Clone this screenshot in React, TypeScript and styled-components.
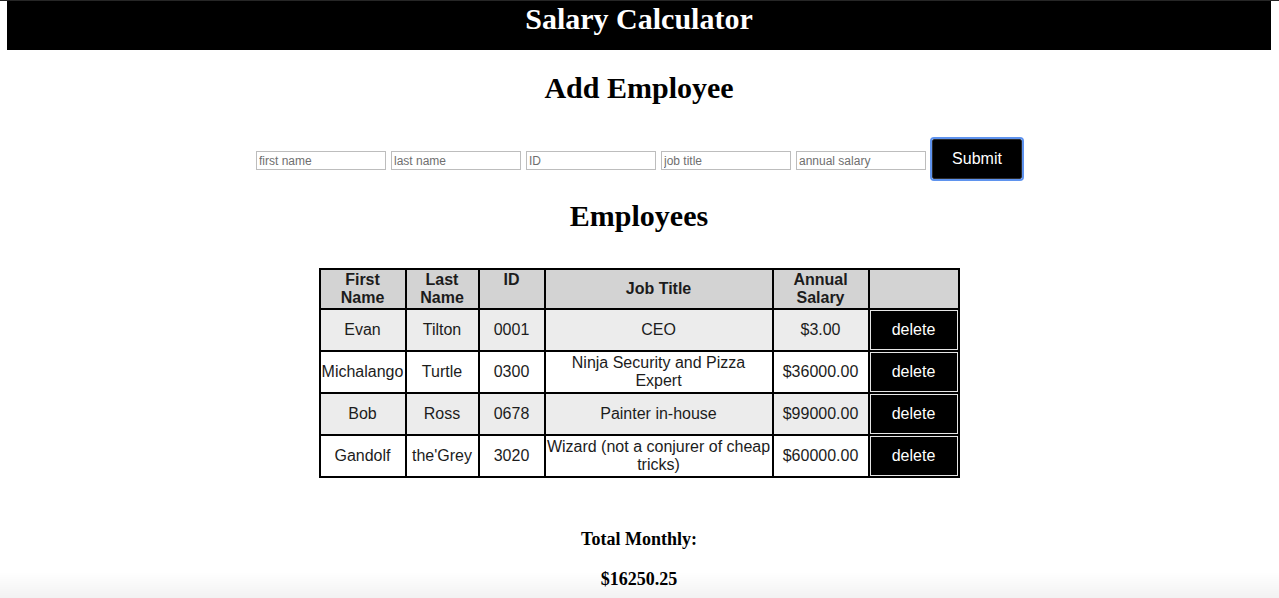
import styled, { createGlobalStyle } from "styled-components";

const GlobalStyle = createGlobalStyle`
  html, body {
    margin: 0;
    padding: 0;
    background: #fff;
  }
  body {
    border-top: 1px solid #262626;
    padding: 0 8px 0 7px;
    font-family: "Liberation Serif", "Times New Roman", serif;
    color: #000;
  }
`;

const Header = styled.h1`
  margin: 0;
  background-color: #000;
  color: #fff;
  font-size: 30px;
  font-weight: 700;
  line-height: 35px;
  height: 49px;
  text-align: center;
`;

const SectionTitle = styled.h2<{ $top: number; $bottom: number }>`
  margin: ${(props) => props.$top}px 0 ${(props) => props.$bottom}px;
  font-size: 30px;
  font-weight: 700;
  line-height: 36px;
  text-align: center;
`;

const Form = styled.form`
  display: flex;
  justify-content: center;
  align-items: center;
  gap: 5px;
  padding-left: 2px;
`;

const Input = styled.input`
  box-sizing: border-box;
  width: 130px;
  height: 19px;
  margin-top: 3px;
  padding: 1px 2px;
  border: 1px solid #bdbdbd;
  font-family: "Liberation Sans", Arial, sans-serif;
  font-size: 12px;
  color: #333;
  &::placeholder {
    color: #6f6f6f;
  }
`;

const SubmitButton = styled.button`
  box-sizing: border-box;
  width: 90px;
  height: 40px;
  margin: 2px 2px 2px 1px;
  background-color: #000;
  color: #fff;
  border: 1px solid #2b2b2b;
  border-radius: 2px;
  outline: 2px solid #5f93ee;
  font-family: "Liberation Sans", Arial, sans-serif;
  font-size: 16px;
`;

const TableWrap = styled.div`
  display: flex;
  justify-content: center;
`;

const Table = styled.table`
  width: 639px;
  border-collapse: collapse;
  table-layout: fixed;
  border: 2px solid #000;
  font-family: "Liberation Sans", Arial, sans-serif;
  font-size: 16px;
  line-height: 18px;
  color: #1c1c1c;
`;

const HeadCell = styled.th<{ $top?: boolean }>`
  height: 37px;
  padding: 0 1px;
  border: 2px solid #000;
  background-color: #d3d3d3;
  font-weight: 700;
  text-align: center;
  vertical-align: ${(props) => (props.$top ? "top" : "middle")};
  padding-top: ${(props) => (props.$top ? "1px" : "0")};
`;

const Row = styled.tr<{ $shade: boolean }>`
  background-color: ${(props) => (props.$shade ? "#ececec" : "#fff")};
`;

const Cell = styled.td`
  height: 40px;
  padding: 0 1px;
  border: 2px solid #000;
  text-align: center;
  vertical-align: middle;
  white-space: normal;
`;

const ButtonCell = styled.td`
  height: 40px;
  padding: 0;
  border: 2px solid #000;
  background-color: #fff;
`;

const DeleteButton = styled.button`
  display: block;
  box-sizing: border-box;
  width: 100%;
  height: 40px;
  margin: 0;
  background-color: #000;
  color: #fff;
  border: 1px solid #e6e6e6;
  font-family: "Liberation Sans", Arial, sans-serif;
  font-size: 16px;
`;

const Total = styled.h3<{ $top: number }>`
  margin: ${(props) => props.$top}px 0 0;
  font-size: 18px;
  font-weight: 700;
  line-height: 22px;
  text-align: center;
`;

const BottomFade = styled.div`
  position: fixed;
  left: 0;
  right: 0;
  bottom: 0;
  height: 26px;
  pointer-events: none;
  background: linear-gradient(to bottom, rgba(0, 0, 0, 0), rgba(0, 0, 0, 0.05));
`;

const employees = [
  { first: "Evan", last: "Tilton", id: "0001", title: "CEO", salary: 3 },
  {
    first: "Michalango",
    last: "Turtle",
    id: "0300",
    title: "Ninja Security and Pizza Expert",
    salary: 36000,
  },
  { first: "Bob", last: "Ross", id: "0678", title: "Painter in-house", salary: 99000 },
  {
    first: "Gandolf",
    last: "the'Grey",
    id: "3020",
    title: "Wizard (not a conjurer of cheap tricks)",
    salary: 60000,
  },
];

const placeholders = ["first name", "last name", "ID", "job title", "annual salary"];

function App() {
  const total = employees.reduce((sum, e) => sum + e.salary, 0) / 12;
  return (
    <div>
      <GlobalStyle />
      <Header>Salary Calculator</Header>
      <SectionTitle $top={20} $bottom={31}>
        Add Employee
      </SectionTitle>
      <Form onSubmit={(e) => e.preventDefault()}>
        {placeholders.map((p) => (
          <Input key={p} placeholder={p} />
        ))}
        <SubmitButton type="submit">Submit</SubmitButton>
      </Form>
      <SectionTitle $top={17} $bottom={34}>
        Employees
      </SectionTitle>
      <TableWrap>
        <Table>
          <colgroup>
            <col style={{ width: 86 }} />
            <col style={{ width: 73 }} />
            <col style={{ width: 66 }} />
            <col style={{ width: 228 }} />
            <col style={{ width: 96 }} />
            <col style={{ width: 90 }} />
          </colgroup>
          <thead>
            <tr>
              <HeadCell>First Name</HeadCell>
              <HeadCell>Last Name</HeadCell>
              <HeadCell $top>ID</HeadCell>
              <HeadCell>Job Title</HeadCell>
              <HeadCell>Annual Salary</HeadCell>
              <HeadCell />
            </tr>
          </thead>
          <tbody>
            {employees.map((e, i) => (
              <Row key={e.id} $shade={i % 2 === 0}>
                <Cell>{e.first}</Cell>
                <Cell>{e.last}</Cell>
                <Cell>{e.id}</Cell>
                <Cell>{e.title}</Cell>
                <Cell>${e.salary.toFixed(2)}</Cell>
                <ButtonCell>
                  <DeleteButton>delete</DeleteButton>
                </ButtonCell>
              </Row>
            ))}
          </tbody>
        </Table>
      </TableWrap>
      <Total $top={50}>Total Monthly:</Total>
      <Total $top={18}>${total.toFixed(2)}</Total>
      <BottomFade />
    </div>
  );
}

export default App;
